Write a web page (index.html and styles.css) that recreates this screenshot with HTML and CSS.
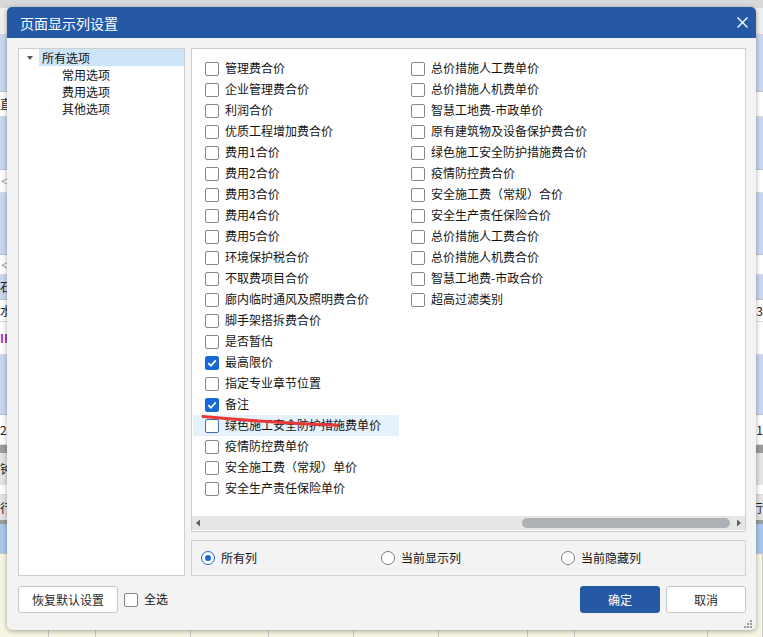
FILE: index.html
```html
<!DOCTYPE html>
<html lang="zh-CN">
<head>
<meta charset="utf-8">
<title>页面显示列设置</title>
<link rel="stylesheet" href="styles.css">
</head>
<body>
<div class="app">
  <div class="band b-top"></div>
  <div class="band b-light"></div>
  <div class="band b-blue h57"></div>
  <div class="band b-white h25"><span class="lt">直</span><span></span></div>
  <div class="band b-blue h53"></div>
  <div class="band b-white h23"><span class="lt gray">＜</span><span></span></div>
  <div class="band b-blue h62"></div>
  <div class="band b-white h20"><span class="lt gray">＜</span><span></span></div>
  <div class="band b-blue h25"><span class="lt">石</span><span></span></div>
  <div class="band b-white h22"><span class="lt">水</span><span class="rt">3</span></div>
  <div class="band b-white h33"><span class="lt purple">IF</span><span></span></div>
  <div class="band b-blue h60"></div>
  <div class="band b-white h30"><span class="lt">20</span><span class="rt">1</span></div>
  <div class="band b-dark h8"></div>
  <div class="band b-gray h32"><span class="lt">钟</span><span></span></div>
  <div class="band b-white h10"></div>
  <div class="band b-gray h25"><span class="lt">行</span><span class="rt">行</span></div>
  <div class="band b-dark h4"></div>
  <div class="band b-blue2 h29"></div>
  <div class="band b-beige">
    <div class="cell"></div><div class="cell"></div><div class="cell"></div><div class="cell"></div><div class="cell"></div>
    <div class="cell"></div><div class="cell"></div><div class="cell"></div><div class="cell"></div><div class="cell"></div>
  </div>
</div>

<div class="dialog">
  <div class="dlg-head">
    <span class="dlg-title">页面显示列设置</span>
    <svg class="dlg-close" viewBox="0 0 11 11" width="11" height="11"><path d="M0.5 0.5 L10.5 10.5 M10.5 0.5 L0.5 10.5" stroke="#fff" stroke-width="1.4" fill="none"/></svg>
  </div>

  <div class="dlg-body">
    <div class="tree">
      <div class="tree-row"><span class="caret-box"><span class="caret"></span></span><span class="tree-label sel">所有选项</span></div>
      <div class="tree-row child">常用选项</div>
      <div class="tree-row child">费用选项</div>
      <div class="tree-row child">其他选项</div>
    </div>

    <div class="right">
      <div class="listbox">
        <div class="cols">
          <div class="col">
            <div class="item"><span class="cb"></span><span class="txt">管理费合价</span></div>
            <div class="item"><span class="cb"></span><span class="txt">企业管理费合价</span></div>
            <div class="item"><span class="cb"></span><span class="txt">利润合价</span></div>
            <div class="item"><span class="cb"></span><span class="txt">优质工程增加费合价</span></div>
            <div class="item"><span class="cb"></span><span class="txt">费用1合价</span></div>
            <div class="item"><span class="cb"></span><span class="txt">费用2合价</span></div>
            <div class="item"><span class="cb"></span><span class="txt">费用3合价</span></div>
            <div class="item"><span class="cb"></span><span class="txt">费用4合价</span></div>
            <div class="item"><span class="cb"></span><span class="txt">费用5合价</span></div>
            <div class="item"><span class="cb"></span><span class="txt">环境保护税合价</span></div>
            <div class="item"><span class="cb"></span><span class="txt">不取费项目合价</span></div>
            <div class="item"><span class="cb"></span><span class="txt">廊内临时通风及照明费合价</span></div>
            <div class="item"><span class="cb"></span><span class="txt">脚手架搭拆费合价</span></div>
            <div class="item"><span class="cb"></span><span class="txt">是否暂估</span></div>
            <div class="item"><span class="cb on"><svg viewBox="0 0 14 14" width="14" height="14"><path d="M3.3 7.2 L5.9 9.8 L10.8 4.3" stroke="#fff" stroke-width="1.8" fill="none"/></svg></span><span class="txt">最高限价</span></div>
            <div class="item"><span class="cb"></span><span class="txt">指定专业章节位置</span></div>
            <div class="item"><span class="cb on"><svg viewBox="0 0 14 14" width="14" height="14"><path d="M3.3 7.2 L5.9 9.8 L10.8 4.3" stroke="#fff" stroke-width="1.8" fill="none"/></svg></span><span class="txt">备注</span></div>
            <div class="item hover"><span class="cb"></span><span class="txt">绿色施工安全防护措施费单价</span></div>
            <div class="item"><span class="cb"></span><span class="txt">疫情防控费单价</span></div>
            <div class="item"><span class="cb"></span><span class="txt">安全施工费（常规）单价</span></div>
            <div class="item"><span class="cb"></span><span class="txt">安全生产责任保险单价</span></div>
          </div>
          <div class="col">
            <div class="item"><span class="cb"></span><span class="txt">总价措施人工费单价</span></div>
            <div class="item"><span class="cb"></span><span class="txt">总价措施人机费单价</span></div>
            <div class="item"><span class="cb"></span><span class="txt">智慧工地费-市政单价</span></div>
            <div class="item"><span class="cb"></span><span class="txt">原有建筑物及设备保护费合价</span></div>
            <div class="item"><span class="cb"></span><span class="txt">绿色施工安全防护措施费合价</span></div>
            <div class="item"><span class="cb"></span><span class="txt">疫情防控费合价</span></div>
            <div class="item"><span class="cb"></span><span class="txt">安全施工费（常规）合价</span></div>
            <div class="item"><span class="cb"></span><span class="txt">安全生产责任保险合价</span></div>
            <div class="item"><span class="cb"></span><span class="txt">总价措施人工费合价</span></div>
            <div class="item"><span class="cb"></span><span class="txt">总价措施人机费合价</span></div>
            <div class="item"><span class="cb"></span><span class="txt">智慧工地费-市政合价</span></div>
            <div class="item"><span class="cb"></span><span class="txt">超高过滤类别</span></div>
          </div>
        </div>
        <div class="hscroll">
          <span class="arrow"><svg viewBox="0 0 14 14" width="14" height="14"><path d="M4 7 L8 3.5 L8 10.5 Z" fill="#606060"/></svg></span>
          <span class="trough"><span class="thumb"></span></span>
          <span class="arrow"><svg viewBox="0 0 14 14" width="14" height="14"><path d="M10 7 L6 3.5 L6 10.5 Z" fill="#606060"/></svg></span>
        </div>
        <svg class="scribble" viewBox="0 0 142 18" width="142" height="18"><path d="M3 5.5 C40 9 90 12.5 138 14.2" stroke="#e83838" stroke-width="3" stroke-linecap="round" fill="none"/></svg>
      </div>

      <div class="radios">
        <label class="radio"><span class="rd on"></span><span class="txt">所有列</span></label>
        <label class="radio"><span class="rd"></span><span class="txt">当前显示列</span></label>
        <label class="radio"><span class="rd"></span><span class="txt">当前隐藏列</span></label>
      </div>
    </div>
  </div>

  <div class="dlg-foot">
    <button class="btn btn-restore">恢复默认设置</button>
    <span class="check-all"><span class="cb"></span><span class="txt">全选</span></span>
    <button class="btn btn-ok">确定</button>
    <button class="btn btn-cancel">取消</button>
  </div>

  <svg class="grip" viewBox="0 0 8 8" width="8" height="8"><g fill="#9a9a9a"><rect x="6" y="0" width="2" height="2"/><rect x="3" y="3" width="2" height="2"/><rect x="6" y="3" width="2" height="2"/><rect x="0" y="6" width="2" height="2"/><rect x="3" y="6" width="2" height="2"/><rect x="6" y="6" width="2" height="2"/></g></svg>
</div>
</body>
</html>
```

FILE: styles.css
```css
* { box-sizing: border-box; }
html, body { margin: 0; padding: 0; }
body {
  width: 763px;
  height: 637px;
  overflow: hidden;
  position: relative;
  font-family: "Noto Sans CJK SC", "Microsoft YaHei", sans-serif;
  font-size: 12px;
  color: #141414;
  background: #ffffff;
}

/* background application */
.app { display: flex; flex-direction: column; height: 637px; }
.band {
  flex: none;
  display: flex;
  justify-content: space-between;
  align-items: center;
  white-space: nowrap;
  overflow: hidden;
  line-height: 1;
  font-size: 12px;
  color: #222;
}
.b-top { height: 8px; background: #d9d9d9; }
.b-light { height: 27px; background: #efefef; border-bottom: 1px solid #d0d0d0; }
.b-blue { background: #c9d7ee; border-bottom: 1px solid #b8c4d8; }
.b-blue2 { background: #a9c6ea; }
.b-white { background: #ffffff; border-bottom: 1px solid #dcdcdc; }
.b-gray { background: #e4e4e4; }
.b-dark { background: #9c9c9c; }
.b-beige {
  height: 84px;
  background: #f7f5e3;
  display: grid;
  grid-template-columns: 49px 47px 95px 78px 85px 85px 89px 47px 133px 1fr;
  align-items: stretch;
  border-top: 1px solid #c8c8c8;
}
.cell { border-right: 1px solid #c9c9c9; }
.h4 { height: 4px; } .h8 { height: 8px; } .h10 { height: 10px; }
.h20 { height: 20px; } .h22 { height: 22px; } .h23 { height: 23px; }
.h25 { height: 25px; } .h29 { height: 29px; } .h30 { height: 30px; }
.h32 { height: 32px; } .h33 { height: 33px; } .h53 { height: 53px; }
.h57 { height: 57px; } .h60 { height: 60px; } .h62 { height: 62px; }
.lt { padding-left: 0; }
.rt { padding-right: 0; }
.gray { color: #999; }
.purple { color: #9a2fb5; font-weight: bold; }

/* dialog */
.dialog {
  position: absolute;
  left: 7px;
  top: 7px;
  width: 749px;
  height: 623px;
  background: #f3f3f3;
  border-radius: 5px;
  box-shadow: 0 1px 5px rgba(0, 0, 0, 0.35);
  display: flex;
  flex-direction: column;
}
.dlg-head {
  flex: none;
  height: 31px;
  background: #2559a6;
  border-radius: 5px 5px 0 0;
  display: flex;
  align-items: center;
  justify-content: space-between;
  padding: 0 8px 0 13px;
}
.dlg-title { color: #ffffff; font-size: 14px; line-height: 1; }
.dlg-close { display: block; }

.dlg-body {
  flex: none;
  display: grid;
  grid-template-columns: 167px 555px;
  column-gap: 6px;
  padding: 10px 10px 0 11px;
  height: 538px;
}

/* tree */
.tree {
  background: #ffffff;
  border: 1px solid #cfcfcf;
}
.tree-row {
  height: 17px;
  display: flex;
  align-items: center;
  line-height: 17px;
  white-space: nowrap;
}
.caret-box { width: 20px; height: 17px; flex: none; display: flex; align-items: center; }
.caret {
  margin-left: 8px;
  width: 0;
  height: 0;
  border-left: 3px solid transparent;
  border-right: 3px solid transparent;
  border-top: 4px solid #555;
}
.tree-label { flex: 1; height: 17px; padding-left: 3px; }
.tree-label.sel { background: #cce5f8; }
.tree-row.child { padding-left: 43px; }

/* right side */
.right {
  display: flex;
  flex-direction: column;
  gap: 8px;
}
.listbox {
  position: relative;
  height: 484px;
  background: #ffffff;
  border: 1px solid #cfcfcf;
  display: flex;
  flex-direction: column;
}
.cols {
  flex: 1;
  display: flex;
  padding: 9px 0 0 1px;
}
.col { width: 206px; flex: none; }
.item {
  height: 21px;
  display: flex;
  align-items: center;
  gap: 6px;
  padding-left: 12px;
  white-space: nowrap;
  line-height: 1;
}
.txt { padding-bottom: 1px; }
.item.hover { background: #e5f1fb; }
.item.hover .cb { border-color: #3d6db5; }

.cb {
  flex: none;
  width: 14px;
  height: 14px;
  border: 1px solid #868686;
  border-radius: 2px;
  background: #ffffff;
  display: block;
  position: relative;
}
.cb.on { background: #1769d4; border-color: #1769d4; }
.cb.on svg { position: absolute; left: -1px; top: -1px; }

.hscroll {
  flex: none;
  height: 14px;
  margin-bottom: 1px;
  background: #e6e6e6;
  display: flex;
}
.arrow { width: 14px; height: 14px; flex: none; display: block; }
.arrow svg { display: block; }
.trough { flex: 1; display: flex; justify-content: flex-end; align-items: center; }
.thumb {
  width: 208px;
  height: 10px;
  margin-right: 1px;
  border-radius: 5px;
  background: #adb0b5;
}
.scribble { position: absolute; left: 8px; top: 362px; }

.radios {
  height: 36px;
  background: #f3f3f3;
  border: 1px solid #d3d3d3;
  display: flex;
  align-items: center;
  padding-left: 9px;
}
.radio {
  width: 180px;
  flex: none;
  display: flex;
  align-items: center;
  gap: 6px;
  line-height: 1;
}
.rd {
  width: 14px;
  height: 14px;
  border: 1px solid #7e7e7e;
  border-radius: 50%;
  background: #ffffff;
  display: flex;
  align-items: center;
  justify-content: center;
  flex: none;
}
.rd.on { border-color: #1769d4; }
.rd.on::after {
  content: "";
  width: 6px;
  height: 6px;
  border-radius: 50%;
  background: #1769d4;
}

/* footer */
.dlg-foot {
  flex: none;
  display: flex;
  align-items: center;
  margin-top: 10px;
  padding: 0 10px 0 11px;
}
.btn {
  height: 27px;
  border: 1px solid #c6c6c6;
  border-radius: 3px;
  background: #ffffff;
  font-family: inherit;
  font-size: 12px;
  color: #2a2a2a;
  padding: 0;
  line-height: 1;
}
.btn-restore { width: 100px; }
.btn-ok {
  width: 80px;
  margin-left: auto;
  background: #2559a6;
  border-color: #2559a6;
  color: #ffffff;
}
.btn-cancel { width: 80px; margin-left: 6px; }
.check-all {
  display: flex;
  align-items: center;
  gap: 6px;
  margin-left: 6px;
  line-height: 1;
}
.grip { position: absolute; right: 4px; bottom: 2px; }
```
